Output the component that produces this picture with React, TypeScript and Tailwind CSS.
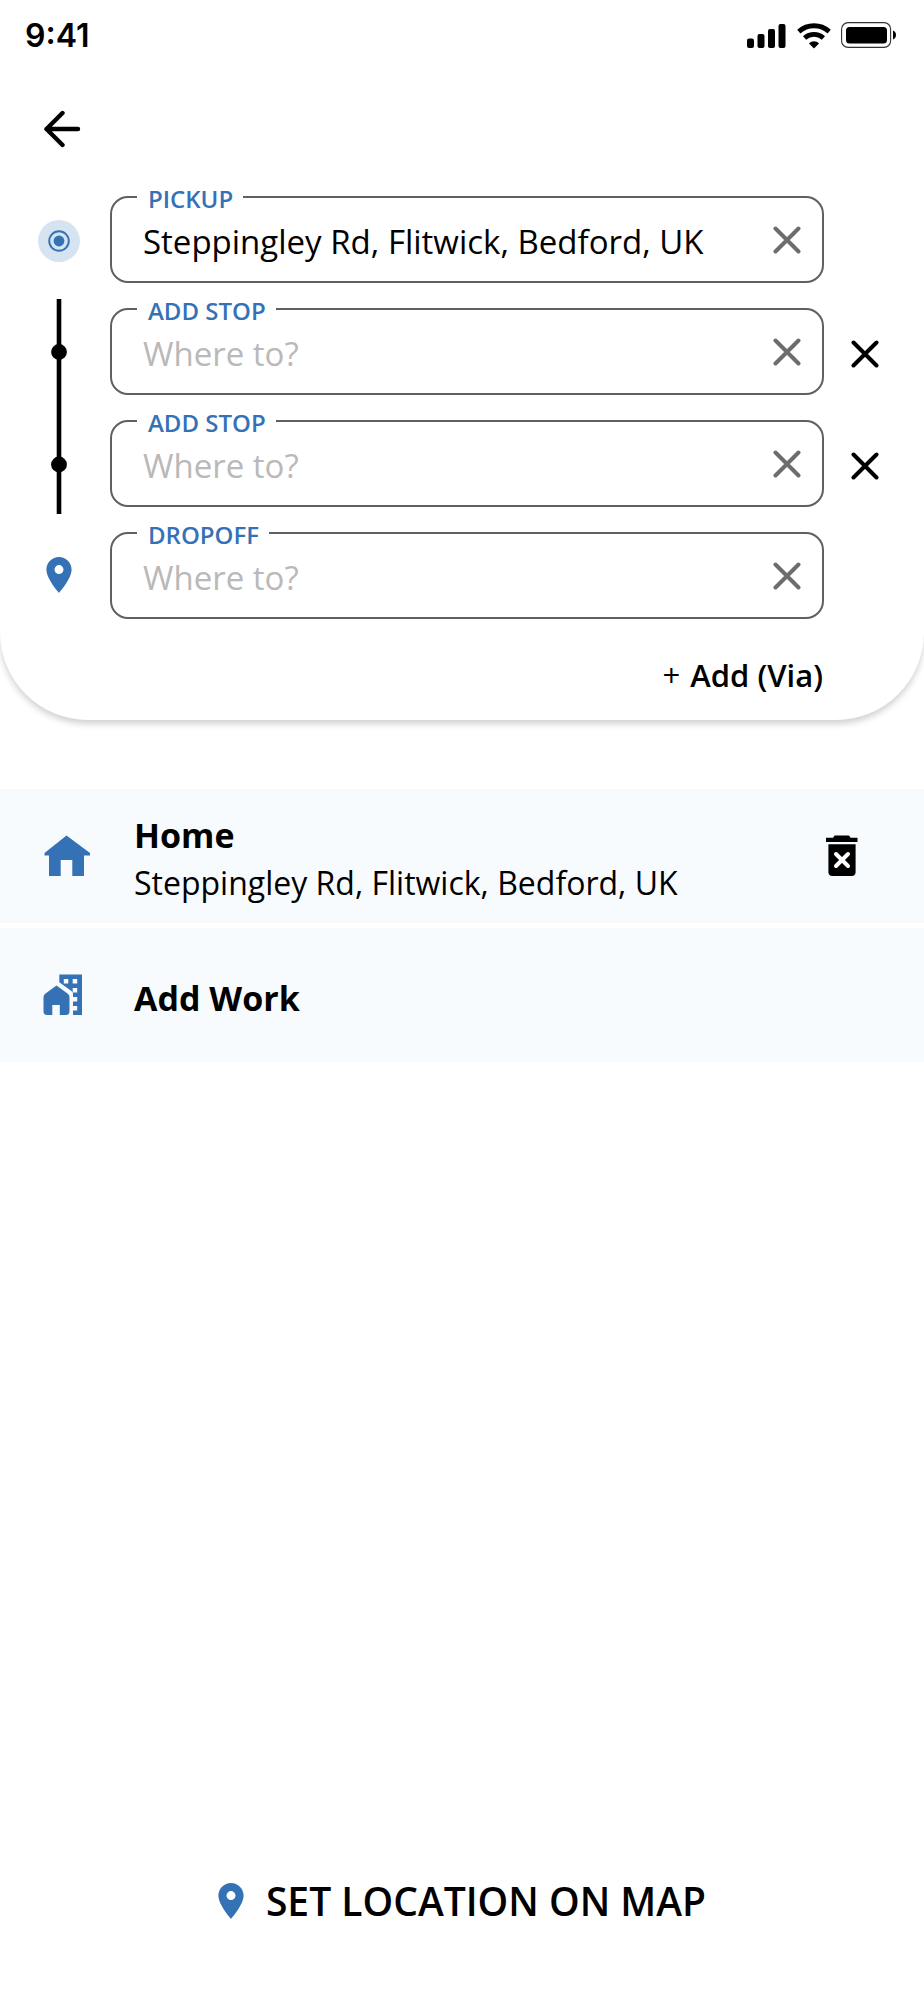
import { useState } from "react";

interface Stop {
  id: number;
  label: string;
  value: string;
  removable: boolean;
}

const initialStops: Stop[] = [
  { id: 1, label: "PICKUP", value: "Steppingley Rd, Flitwick, Bedford, UK", removable: false },
  { id: 2, label: "ADD STOP", value: "", removable: true },
  { id: 3, label: "ADD STOP", value: "", removable: true },
  { id: 4, label: "DROPOFF", value: "", removable: false },
];

function StatusBar() {
  return (
    <header className="flex h-18 items-center justify-between pl-[25px] pr-[27px]">
      <span className="font-['Inter',sans-serif] text-[32px] font-semibold leading-10">9:41</span>
      <div className="flex items-center gap-2.5">
        <svg width="40" height="26" viewBox="0 0 40 26" aria-hidden="true">
          <rect x="0" y="15.5" width="7" height="9.5" rx="2" />
          <rect x="10.5" y="11" width="7" height="14" rx="2" />
          <rect x="21" y="6" width="7" height="19" rx="2" />
          <rect x="31.5" y="1" width="7" height="24" rx="2" />
        </svg>
        <svg width="34" height="26" viewBox="0 0 34 26" fill="none" stroke="currentColor" aria-hidden="true">
          <path d="M1.8 8.6C10.5 0.8 23.5 0.8 32.2 8.6" strokeWidth="4.8" />
          <path d="M7.6 15C13 10.2 21 10.2 26.4 15" strokeWidth="4.8" />
          <path d="M17 25.5L12 20.6C14.8 17.6 19.2 17.6 22 20.6Z" fill="currentColor" stroke="none" />
        </svg>
        <svg width="56" height="28" viewBox="0 0 56 28" aria-hidden="true">
          <rect x="0.6" y="0.6" width="49" height="24.8" rx="6.5" fill="none" stroke="#333" strokeWidth="1.1" />
          <rect x="5" y="5" width="41" height="16.6" rx="3.5" />
          <path d="M52 8.5C54 9.2 55 11 55 13s-1 3.8-3 4.5z" />
        </svg>
      </div>
    </header>
  );
}

function CrossIcon() {
  return (
    <svg width="28" height="28" viewBox="0 0 28 28" fill="none" stroke="currentColor" strokeWidth="4" strokeLinecap="round" aria-hidden="true">
      <path d="M2.5 2.5L25.5 25.5M25.5 2.5L2.5 25.5" />
    </svg>
  );
}

function PinIcon() {
  return (
    <svg width="26" height="36" viewBox="5 2 14 20" className="text-[#3572b5]" fill="currentColor" aria-hidden="true">
      <path d="M12 2C8.13 2 5 5.13 5 9c0 5.25 7 13 7 13s7-7.75 7-13c0-3.87-3.13-7-7-7zm0 9.5a2.5 2.5 0 0 1 0-5 2.5 2.5 0 0 1 0 5z" />
    </svg>
  );
}

function RouteTrack() {
  return (
    <div className="flex w-11 shrink-0 flex-col items-center pt-6" aria-hidden="true">
      <svg width="42" height="42" viewBox="0 0 42 42">
        <circle cx="21" cy="21" r="21" fill="#d6e3f1" />
        <circle cx="21" cy="21" r="9.8" fill="none" stroke="#3572b5" strokeWidth="1.9" />
        <circle cx="21" cy="21" r="5.4" fill="#3572b5" />
      </svg>
      <svg className="mt-[37px]" width="16" height="215" viewBox="0 0 16 215">
        <rect x="5.7" width="4.6" height="215" />
        <circle cx="8" cy="53" r="7.9" />
        <circle cx="8" cy="165.5" r="7.9" />
      </svg>
      <div className="mt-[43px]">
        <PinIcon />
      </div>
    </div>
  );
}

interface StopFieldProps {
  stop: Stop;
  onChange: (value: string) => void;
  onRemove: () => void;
}

function StopField({ stop, onChange, onRemove }: StopFieldProps) {
  const inputId = `stop-${stop.id}`;

  return (
    <div className="flex items-center">
      <div className="relative flex h-[87px] min-w-0 flex-1 items-center rounded-[18px] border-2 border-[#606060] pl-[31px] pr-[21px]">
        <label
          htmlFor={inputId}
          className="absolute -top-[15px] left-[25px] bg-white pl-[11px] pr-2.5 text-2xl font-semibold leading-8 text-[#3572b5]"
        >
          {stop.label}
        </label>
        <input
          id={inputId}
          type="text"
          value={stop.value}
          placeholder="Where to?"
          onChange={(e) => onChange(e.target.value)}
          className="h-13 min-w-0 flex-1 bg-transparent pt-1 text-[33px] outline-none placeholder:text-[#b9b9b9]"
        />
        <button type="button" aria-label="Clear" onClick={() => onChange("")} className="text-[#6d6d6d]">
          <CrossIcon />
        </button>
      </div>
      <div className="flex w-25 shrink-0 pl-[27px] pt-1">
        {stop.removable && (
          <button type="button" aria-label="Remove stop" onClick={onRemove}>
            <CrossIcon />
          </button>
        )}
      </div>
    </div>
  );
}

export default function App() {
  const [stops, setStops] = useState(initialStops);

  const update = (id: number, value: string) =>
    setStops(stops.map((s) => (s.id === id ? { ...s, value } : s)));
  const remove = (id: number) => setStops(stops.filter((s) => s.id !== id));
  const addVia = () => {
    const stop = { id: Date.now(), label: "ADD STOP", value: "", removable: true };
    setStops([...stops.slice(0, -1), stop, ...stops.slice(-1)]);
  };

  return (
    <div className="flex min-h-screen flex-col bg-white font-['Open_Sans',sans-serif] text-black">
      <section className="rounded-b-[88px] pb-[21px] shadow-[0_4px_6px_rgba(0,0,0,0.18)]">
        <StatusBar />
        <button type="button" aria-label="Back" className="ml-[43px] mt-[38px] block">
          <svg width="38" height="38" viewBox="0 0 38 38" fill="none" stroke="currentColor" strokeWidth="4.4" strokeLinecap="round" strokeLinejoin="round" aria-hidden="true">
            <path d="M19.5 3L3.5 19L19.5 35M3.5 19H35" />
          </svg>
        </button>

        <div className="mt-12 flex pl-[37px]">
          <RouteTrack />
          <div className="ml-[29px] flex min-w-0 flex-1 flex-col gap-[25px]">
            {stops.map((stop) => (
              <StopField
                key={stop.id}
                stop={stop}
                onChange={(value) => update(stop.id, value)}
                onRemove={() => remove(stop.id)}
              />
            ))}
          </div>
        </div>

        <div className="mt-8 flex justify-end pr-[101px]">
          <button type="button" onClick={addVia} className="flex items-center gap-2.5 text-[31px] font-semibold leading-12">
            <span className="font-normal">+</span> Add (Via)
          </button>
        </div>
      </section>

      <ul className="mt-[69px] flex flex-col gap-[5px]">
        <li className="flex h-[134px] items-center bg-[#f8fbfe] pl-11 pr-[65px]">
          <svg width="47" height="42" viewBox="0 0 47 42" className="shrink-0 text-[#3572b5]" fill="currentColor" aria-hidden="true">
            <path d="M22.5 0.5L46 18V20.4H40V41H28.3V25H16.7V41H5V20.4H0.5V18Z" />
          </svg>
          <div className="ml-[43px] flex-1 pt-1.5">
            <h2 className="text-[34px] font-bold leading-12">Home</h2>
            <p className="text-[32px] leading-12">Steppingley Rd, Flitwick, Bedford, UK</p>
          </div>
          <button type="button" aria-label="Delete home">
            <svg width="34" height="42" viewBox="0 0 34 42" aria-hidden="true">
              <path d="M1 2.8H8L9.6 0.5H24L25.6 2.8H32.5V7H1Z" />
              <path d="M3.4 9.2H30.6V37C30.6 39.5 29 41 26.6 41H7.4C5 41 3.4 39.5 3.4 37Z" />
              <path d="M11 19L23 31M23 19L11 31" stroke="#fff" strokeWidth="4" strokeLinecap="round" />
            </svg>
          </button>
        </li>
        <li className="bg-[#f8fbfe]">
          <button type="button" className="flex h-[134px] w-full items-center pl-[43px] text-left">
            <svg width="40" height="42" viewBox="0 0 40 42" className="text-[#3572b5]" fill="currentColor" aria-hidden="true">
              <path d="M13.5 11.5L24.5 19.5C26 20.6 26.5 22 26.5 23.5V37.5C26.5 40 25 41 23 41H16.8V31H9.3V41H4C2 41 0.5 40 0.5 37.5V23.5C0.5 22 1 20.6 2.5 19.5Z" />
              <path fillRule="evenodd" d="M16.3 0.5H39V41H30V36.5H34.2V32H30V27.5H34.2V23H30V20C30 18.6 29.5 17.7 28.4 16.9L16.3 8.3ZM20.8 5V9.5H25.3V5ZM29.7 5V9.5H34.2V5ZM29.7 14V18.5H34.2V14Z" />
            </svg>
            <span className="ml-[51px] pt-1.5 text-[34px] font-bold leading-12">Add Work</span>
          </button>
        </li>
      </ul>

      <div className="mt-auto flex justify-center pb-[67px]">
        <button type="button" className="flex items-center gap-[22px] text-[39px] font-semibold leading-16">
          <PinIcon />
          SET LOCATION ON MAP
        </button>
      </div>
    </div>
  );
}
